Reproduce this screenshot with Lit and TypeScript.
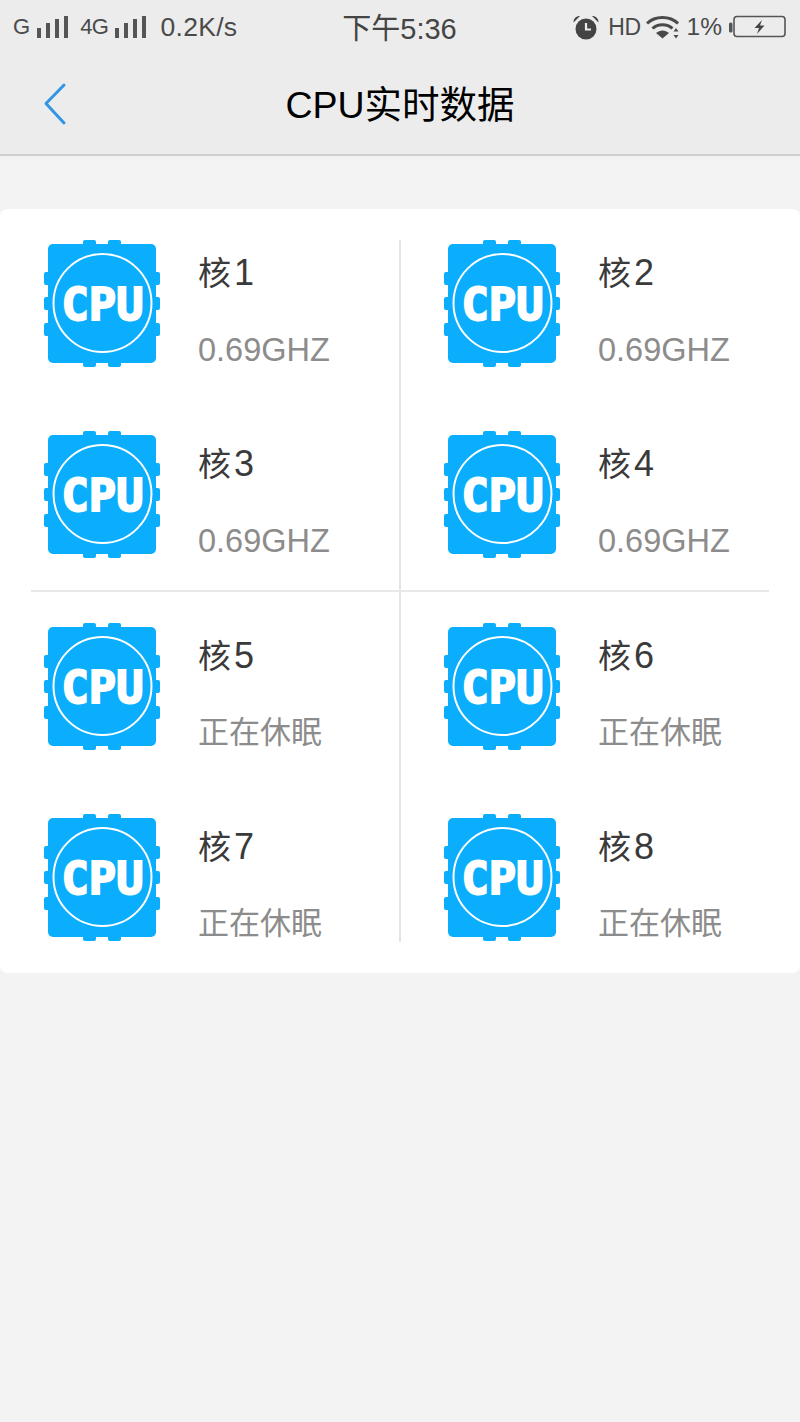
import { LitElement, html, css } from "lit";
import { customElement } from "lit/decorators.js";

const bars = html`<svg class="bars" width="31" height="22" viewBox="0 0 31 22"><g fill="#555">
  <rect x="0" y="12" width="4" height="10"/><rect x="9" y="7" width="4" height="15"/><rect x="18" y="3" width="4" height="19"/><rect x="27" y="0" width="4" height="22"/></g></svg>`;

const cpu = html`<svg class="cpu" width="116" height="128" viewBox="0 0 116 128">
  <g fill="#0aaefc">
    <rect x="4" y="4" width="108" height="119" rx="5"/>
    <rect x="39" y="0" width="13" height="8" rx="2"/><rect x="64" y="0" width="13" height="8" rx="2"/>
    <rect x="39" y="119" width="13" height="8" rx="2"/><rect x="64" y="119" width="13" height="8" rx="2"/>
    <rect x="0" y="32" width="8" height="13" rx="2"/><rect x="0" y="57" width="8" height="13" rx="2"/><rect x="0" y="83" width="8" height="13" rx="2"/>
    <rect x="108" y="32" width="8" height="13" rx="2"/><rect x="108" y="57" width="8" height="13" rx="2"/><rect x="108" y="83" width="8" height="13" rx="2"/>
  </g>
  <circle cx="58.5" cy="63" r="49" fill="none" stroke="#fff" stroke-width="2"/>
  <text class="cpu-text" x="17.500" y="80" textLength="82" lengthAdjust="spacingAndGlyphs">CPU</text>
</svg>`;

@customElement("app-root")
export class AppRoot extends LitElement {
  static styles = css`
    :host { display: block; min-height: 1422px; background: #f3f3f3; font-family: "Liberation Sans", "Noto Sans CJK SC", sans-serif; }
    .header { background: #ececec; height: 154px; border-bottom: 2px solid #cfcfcf; box-sizing: content-box; }
    .status { height: 54px; display: grid; grid-template-columns: 1fr auto 1fr; align-items: center; padding: 0 14px 0 13px; color: #4a4a4a; }
    .left, .right { display: flex; align-items: center; }
    .right { justify-content: flex-end; }
    .s22 { font-size: 22px; }
    .speed { font-size: 26.5px; letter-spacing: .3px; margin-left: 14px; }
    .bars { margin-left: 7px; }
    .g4 { margin-left: 12px; letter-spacing: -.5px; }
    .time { font-size: 29px; color: #444; position: relative; top: -1px; }
    .alarm { margin-right: 9px; }
    .hd { font-size: 23px; margin-right: 5px; letter-spacing: -.5px; }
    .wifi { margin-right: 7px; }
    .pct { font-size: 24.5px; margin-right: 7px; }
    .nav { height: 100px; display: grid; grid-template-columns: 1fr auto 1fr; align-items: center; }
    .back { margin-left: 42px; display: block; }
    .title { font-size: 37.5px; color: #000; line-height: 1; position: relative; top: 2px; }
    .card { margin-top: 53px; background: #fff; border-radius: 7px; padding: 31px 31px; }
    .sec { display: grid; grid-template-columns: 1fr 1fr; }
    .sec.top { border-bottom: 2px solid #e8e8e8; }
    .col { display: flex; flex-direction: column; gap: 63px; }
    .col.l { padding-left: 13px; border-right: 1px solid #e4e4e4; }
    .col.r { border-left: 1px solid #e4e4e4; padding-left: 43px; }
    .top .col { padding-bottom: 31px; }
    .bot .col { padding-top: 31px; }
    .cell { display: flex; height: 128px; }
    .cpu { display: block; flex: none; }
    .cpu-text { font-family: "DejaVu Sans Mono", monospace; font-weight: 700; font-size: 44px; fill: #fff; stroke: #fff; stroke-width: 2px; stroke-linejoin: miter; }
    .info { margin-left: 38px; }
    .name { font-size: 33px; line-height: 40px; color: #3a3a3a; margin-top: 13px; display: flex; align-items: baseline; }
    .num { font-size: 36px; margin-left: 3px; }
    .val { font-size: 32.5px; line-height: 40px; color: #8c8c8c; margin-top: 36px; }
    .val.cjk { font-size: 31px; }
  `;

  private cell(n: number, v: string, cjk = false) {
    return html`<div class="cell">${cpu}<div class="info"><div class="name"><span>核</span><span class="num">${n}</span></div><div class="val ${cjk ? "cjk" : ""}">${v}</div></div></div>`;
  }

  render() {
    const hz = "0.69GHZ";
    const sl = "正在休眠";
    return html`
      <div class="header">
        <div class="status">
          <div class="left"><span class="s22">G</span>${bars}<span class="s22 g4">4G</span>${bars}<span class="speed">0.2K/s</span></div>
          <div class="time">下午5:36</div>
          <div class="right">
            <svg class="alarm" width="26" height="25" viewBox="0 0 26 25"><circle cx="13" cy="14" r="10.500" fill="#444"/><path d="M13 8v6.500h5" fill="none" stroke="#ececec" stroke-width="2.200"/><path d="M0.500 7.500C0.500 3.500 3 1 7 1ZM25.500 7.500C25.500 3.500 23 1 19 1Z" fill="#444"/></svg>
            <span class="hd">HD</span>
            <svg class="wifi" width="34" height="24" viewBox="0 0 34 24"><g fill="none" stroke="#4a4a4a" stroke-width="3"><path d="M1 8.500C9 .5 24 .5 32 8.500"/><path d="M6.500 13.500C12 8.500 21 8.500 26.500 13.500"/></g><path d="M10 18C14 14.500 19 14.500 23 18L16.500 23.500Z" fill="#4a4a4a"/><path d="M30 13l2.500 3.500h-5zM30 23.500l2.500-3.500h-5z" fill="#4a4a4a"/></svg>
            <span class="pct">1%</span>
            <svg width="57" height="24" viewBox="0 0 57 24"><rect x="0" y="7.500" width="3.500" height="10" rx="1.500" fill="#555"/><rect x="5" y="1.500" width="51" height="20" rx="3" fill="none" stroke="#555" stroke-width="1.600"/><path d="M33 5l-7.500 8h4.500l-2 6 7.500-8.500h-4.500z" fill="#444"/></svg>
          </div>
        </div>
        <div class="nav">
          <svg class="back" width="26" height="44" viewBox="0 0 26 44"><path d="M22 3L4 21.500 22 41" fill="none" stroke="#3295e6" stroke-width="3" stroke-linecap="round" stroke-linejoin="round"/></svg>
          <div class="title">CPU实时数据</div>
          <div></div>
        </div>
      </div>
      <div class="card">
        <div class="sec top">
          <div class="col l">${this.cell(1, hz)}${this.cell(3, hz)}</div>
          <div class="col r">${this.cell(2, hz)}${this.cell(4, hz)}</div>
        </div>
        <div class="sec bot">
          <div class="col l">${this.cell(5, sl, true)}${this.cell(7, sl, true)}</div>
          <div class="col r">${this.cell(6, sl, true)}${this.cell(8, sl, true)}</div>
        </div>
      </div>
    `;
  }
}
